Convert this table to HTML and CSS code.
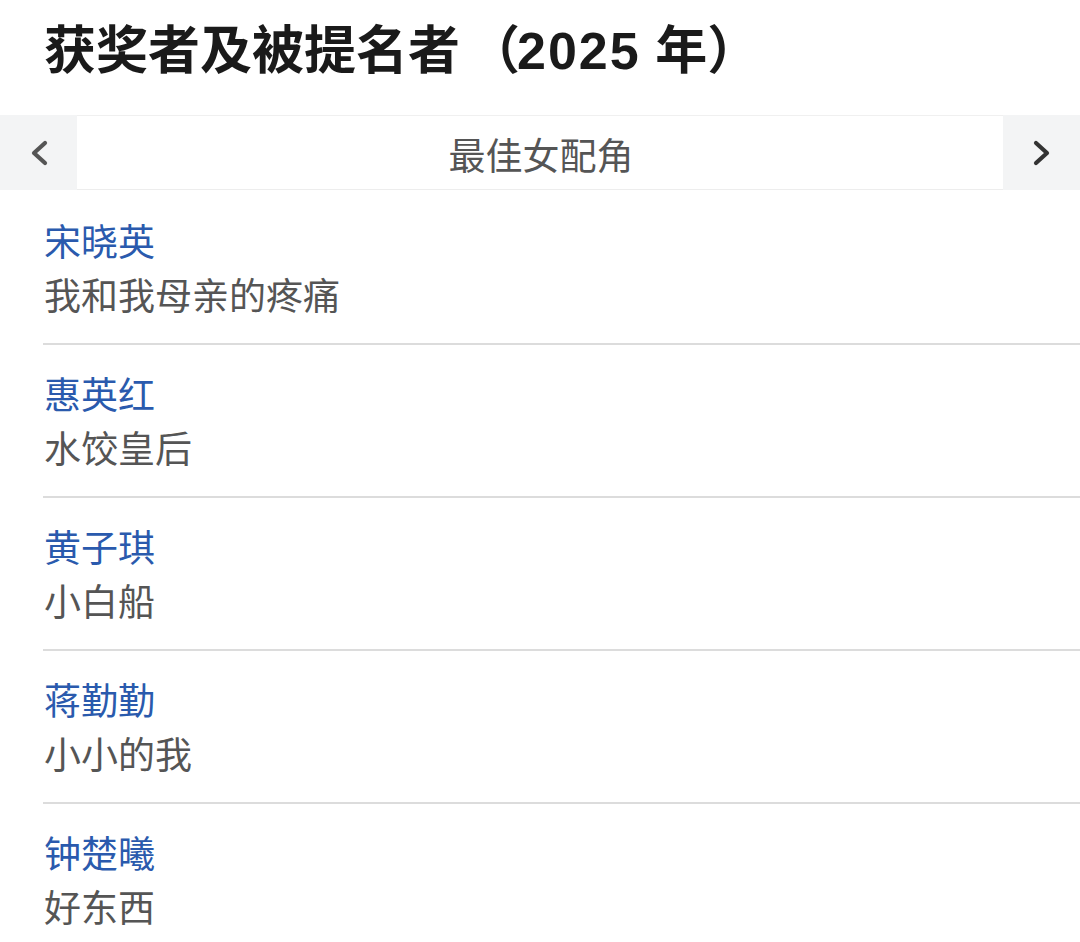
FILE: index.html
```html
<!DOCTYPE html>
<html lang="zh-CN">
<head>
<meta charset="utf-8">
<title>获奖者及被提名者（2025 年）</title>
<link rel="stylesheet" href="styles.css">
</head>
<body>
<div class="page">
  <h1 class="title">获奖者及被提名者<span class="year">（<span class="digits">2025</span> 年）</span></h1>
  <div class="tabs">
    <div class="tab-btn">
      <svg width="20" height="26" viewBox="0 0 20 26"><path d="M16 3 L5 13 L16 23" fill="none" stroke="#555" stroke-width="4.2" stroke-linecap="round" stroke-linejoin="round"/></svg>
    </div>
    <div class="tab-label">最佳女配角</div>
    <div class="tab-btn">
      <svg width="20" height="26" viewBox="0 0 20 26"><path d="M4 3 L15 13 L4 23" fill="none" stroke="#333" stroke-width="4.2" stroke-linecap="round" stroke-linejoin="round"/></svg>
    </div>
  </div>
  <ul class="list">
    <li class="item"><div class="name">宋晓英</div><div class="work">我和我母亲的疼痛</div></li>
    <li class="item"><div class="name">惠英红</div><div class="work">水饺皇后</div></li>
    <li class="item"><div class="name">黄子琪</div><div class="work">小白船</div></li>
    <li class="item"><div class="name">蒋勤勤</div><div class="work">小小的我</div></li>
    <li class="item"><div class="name">钟楚曦</div><div class="work">好东西</div></li>
  </ul>
</div>
</body>
</html>
```
FILE: styles.css
```css
html, body {
  margin: 0;
  padding: 0;
  background: #fff;
}
body {
  font-family: "Noto Sans CJK SC", "Noto Sans", sans-serif;
  overflow: hidden;
}
.page {
  width: 1080px;
  height: 942px;
}
.title {
  margin: 0;
  padding: 15px 0 0 44px;
  height: 115px;
  box-sizing: border-box;
  font-family: "Liberation Sans", "Noto Sans CJK SC", sans-serif;
  font-size: 52px;
  line-height: 72px;
  font-weight: 700;
  color: #1a1a1a;
}
.year {
  margin-left: 8px;
}
.digits {
  letter-spacing: 2px;
  margin-left: -3px;
}
.tabs {
  display: flex;
  height: 75px;
}
.tab-btn {
  width: 77px;
  flex: none;
  background: #f3f4f5;
  display: flex;
  align-items: center;
  justify-content: center;
}
.tab-label {
  flex: 1;
  border-top: 1px solid #f0f0f0;
  border-bottom: 1px solid #ededed;
  display: flex;
  align-items: center;
  justify-content: center;
  font-size: 37px;
  color: #555;
  padding: 2px 0 0 2px;
}
.list {
  list-style: none;
  margin: 0;
  padding: 2px 0 0 43px;
}
.item {
  padding: 21px 0 22px 1px;
  border-bottom: 2px solid #dcdcdc;
}
.name, .work {
  font-size: 37px;
  line-height: 54px;
}
.name {
  color: #2a5aad;
}
.work {
  color: #555;
}
```
